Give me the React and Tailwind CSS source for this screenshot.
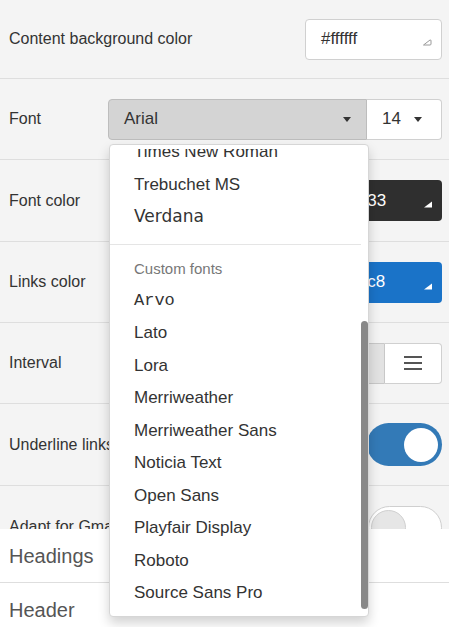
import React from 'react';

const sans = "font-['Liberation_Sans',Arial,sans-serif]";

// little resize grip in the bottom-right of a color input
function Grip({ light }) {
    return (
        <svg width="10" height="7" viewBox="0 0 10 7" className="mb-[2px]">
            {light ? (
                <path d="M1.5 6 L8 1 Q9 0.6 9 1.8 L9 5 Q9 6 8 6 Z" fill="none" stroke="#9a9a9a" strokeWidth="1" />
            ) : (
                <path d="M1 6.5 L9 0.5 L9 6.5 Z" fill="#ffffff" />
            )}
        </svg>
    );
}

function ColorBox({ value, bg, text, light }) {
    return (
        <div className={`w-[137px] h-[41px] rounded-[4px] flex items-center justify-between pl-[15px] pr-[9px] ${bg} ${light ? 'border border-[#d0d0d0]' : ''}`}>
            <span className={`text-[17px] ${text}`}>{value}</span>
            <div className="self-end pb-[11px]"><Grip light={light} /></div>
        </div>
    );
}

function Caret() {
    return <span className="inline-block w-0 h-0 border-x-[4px] border-x-transparent border-t-[5px] border-t-[#333]" />;
}

function Row({ h, label, children }) {
    return (
        <div className={`flex items-center justify-between pl-[9px] pr-[7px] border-b border-[#dedede] ${h}`}>
            <span className="text-[16px] text-[#333]">{label}</span>
            {children}
        </div>
    );
}

const fontsTop = ["Times New Roman", "Trebuchet MS", "Verdana"];
const customFonts = ["Arvo", "Lato", "Lora", "Merriweather", "Merriweather Sans", "Noticia Text", "Open Sans", "Playfair Display", "Roboto", "Source Sans Pro"];

function FontMenu() {
    return (
        <div className="absolute left-px top-[45px] w-[260px] h-[473px] bg-white border border-[#d6d6d6] rounded-[4px] shadow-[0_6px_12px_rgba(0,0,0,0.18)] py-[4px] z-10">
            <div className="h-full overflow-hidden">
                <div className="w-[251px] -mt-[13px]">
                    {fontsTop.map(f => (
                        <div key={f} className={`h-[32.5px] flex items-center pl-[24px] text-[17px] text-[#333] ${f === 'Verdana' ? "font-['DejaVu_Sans',sans-serif] text-[16.5px]" : ''}`}>{f}</div>
                    ))}
                    <div className="mt-[11px] mb-[10px] h-px bg-[#e5e5e5]" />
                    <div className="h-[29px] flex items-center pl-[24px] text-[15px] text-[#777]">Custom fonts</div>
                    {customFonts.map(f => (
                        <div key={f} className={`h-[32.5px] flex items-center pl-[24px] text-[17px] text-[#333] ${f === 'Arvo' ? "font-['Liberation_Mono',monospace]" : ''}`}>{f}</div>
                    ))}
                </div>
            </div>
            <div className="absolute right-0 top-[176px] w-[7px] h-[288px] rounded-full bg-[#888]" />
        </div>
    );
}

export default function App() {
    return (
        <div className={`w-[449px] h-[627px] overflow-hidden bg-[#f4f4f4] text-[#333] ${sans}`}>
            <Row h="h-[79px]" label="Content background color">
                <ColorBox value="#ffffff" bg="bg-white" text="text-[#333]" light />
            </Row>
            <Row h="h-[81px]" label="Font">
                <div className="relative flex">
                    <div className="w-[259px] h-[41px] flex items-center justify-between pl-[15px] pr-[15px] bg-[#d4d4d4] border border-[#bdbdbd] rounded-l-[4px]">
                        <span className="text-[17px]">Arial</span>
                        <Caret />
                    </div>
                    <div className="w-[75px] h-[41px] flex items-center gap-[13px] pl-[15px] bg-white border border-l-0 border-[#d0d0d0] rounded-r-[4px]">
                        <span className="text-[17px]">14</span>
                        <Caret />
                    </div>
                    <FontMenu />
                </div>
            </Row>
            <Row h="h-[82px]" label="Font color">
                <ColorBox value="#333333" bg="bg-[#2f2f2f]" text="text-white" />
            </Row>
            <Row h="h-[81px]" label="Links color">
                <ColorBox value="#1a73c8" bg="bg-[#1a73c8]" text="text-white" />
            </Row>
            <Row h="h-[81px]" label="Interval">
                <div className="flex h-[41px]">
                    <div className="w-[81px] h-full bg-[#e2e2e2] border border-[#c8c8c8] rounded-l-[4px] flex items-center justify-center">
                        <svg width="16" height="16" viewBox="0 0 16 16" fill="#555"><rect x="1" y="1" width="6" height="6" /><rect x="9" y="1" width="6" height="6" /><rect x="1" y="9" width="6" height="6" /><rect x="9" y="9" width="6" height="6" /></svg>
                    </div>
                    <div className="w-[57px] h-full bg-white border border-l-0 border-[#d0d0d0] rounded-r-[4px] flex items-center justify-center">
                        <svg width="18" height="16" viewBox="0 0 18 16"><rect x="0" y="1" width="18" height="2" fill="#555" /><rect x="0" y="7" width="18" height="2" fill="#555" /><rect x="0" y="13" width="18" height="2" fill="#555" /></svg>
                    </div>
                </div>
            </Row>
            <Row h="h-[82px]" label="Underline links">
                <div className="w-[75px] h-[43px] rounded-full bg-[#337ab7] flex items-center justify-end pr-[4px]">
                    <div className="w-[34px] h-[34px] rounded-full bg-white" />
                </div>
            </Row>
            <div className="h-[43px] overflow-hidden">
                <div className="flex items-start justify-between pl-[9px] pr-[7px] pt-[20px]">
                    <span className="text-[16px] leading-[43px] -mt-[1px]">Adapt for Gmail</span>
                    <div className="w-[74px] h-[43px] rounded-full bg-white border border-[#cfcfcf] flex items-center pl-[2px]">
                        <div className="w-[35px] h-[35px] rounded-full bg-[#e6e6e6] border border-[#d0d0d0]" />
                    </div>
                </div>
            </div>
            <div className="bg-white">
                <div className="h-[54px] flex items-center pl-[9px] text-[20px] text-[#555] border-b border-[#dedede]">Headings</div>
                <div className="h-[53px] flex items-center pl-[9px] text-[20px] text-[#555]">Header</div>
            </div>
        </div>
    );
}
